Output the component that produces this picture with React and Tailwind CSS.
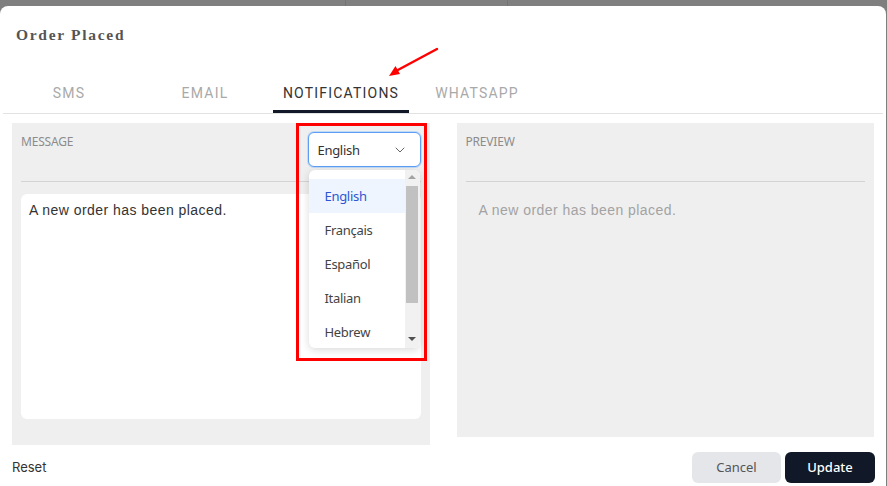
import { ChevronDown } from "lucide-react";

const tabs = ["SMS", "EMAIL", "NOTIFICATIONS", "WHATSAPP"];
const langs = ["English", "Français", "Español", "Italian", "Hebrew"];

export default function App() {
  return (
    <div className="relative w-[887px] h-[486px] overflow-hidden bg-[#7f7f7f]">
      {/* backdrop strip */}
      <div className="flex h-[6px]">
        <div className="w-[345px]" />
        <div className="w-px bg-[#747474]" />
        <div className="w-[161px]" />
        <div className="w-px bg-[#747474]" />
      </div>

      {/* Modal */}
      <div className="flex h-[480px] w-[886px] flex-col rounded-t-[8px] bg-white">
        <div className="h-[65px] pl-4 pt-[20px]">
          <h2 className="text-[15.5px] leading-[18px] font-bold tracking-[1.7px] text-[#555] [font-family:'Liberation_Serif',serif]">
            Order Placed
          </h2>
        </div>

        {/* Tabs */}
        <div className="mx-[3px] flex h-[43px] border-b border-[#e2e2e2] [font-family:Roboto,sans-serif]">
          {tabs.map((t, i) => (
            <button
              key={t}
              className={`flex h-[42px] w-[136px] items-center justify-center text-[14px] tracking-[1.2px] ${
                i === 2 ? "border-b-[3px] border-[#111827] pt-[5px] text-[#333]" : "pt-[2px] text-[#a9a9a9]"
              } ${i === 0 ? "-ml-[2px]" : ""}`}
            >
              {t}
            </button>
          ))}
        </div>

        {/* Panels */}
        <div className="mt-[9px] flex items-start gap-[27px] px-3">
          {/* Message */}
          <div className="flex h-[322px] w-[418px] flex-col bg-[#efefef] px-[9px] pt-[9px]">
            <div className="flex items-start justify-between">
              <span className="mt-[1px] text-[12px] tracking-[-0.2px] text-[#8c8c8c] [font-family:'Noto_Sans',sans-serif]">
                MESSAGE
              </span>
              <div className="relative">
                <div className="flex h-[35px] w-[113px] items-center justify-between rounded-[6px] border border-[#5d9df5] bg-white pl-[9px] pr-[12px] pt-[3px] shadow-[0_0_0_1px_rgba(147,197,253,0.5)] [font-family:'Noto_Sans',sans-serif]">
                  <span className="text-[13px] tracking-[-0.3px] text-[#333]">English</span>
                  <ChevronDown size={16} strokeWidth={1.5} className="-mt-[2px] text-[#666]" />
                </div>
                {/* Dropdown */}
                <div className="absolute left-[1px] top-[38px] z-10 flex h-[178px] w-[111px] overflow-hidden rounded-[6px] bg-white shadow-[0_2px_8px_rgba(0,0,0,0.15)] [font-family:'Noto_Sans',sans-serif]">
                  <div className="flex-1 pt-[9px]">
                    {langs.map((l, i) => (
                      <div
                        key={l}
                        className={`flex h-[34px] items-center pl-[16px] pt-[2px] text-[13px] tracking-[-0.3px] ${
                          i === 0 ? "bg-[#eef5ff] text-[#2f55d4]" : "text-[#444]"
                        }`}
                      >
                        {l}
                      </div>
                    ))}
                  </div>
                  <div className="flex w-[15px] flex-col items-center bg-[#f1f1f1]">
                    <div className="mt-[5px] h-0 w-0 border-x-[4px] border-b-[4px] border-x-transparent border-b-[#a3a3a3]" />
                    <div className="mt-[7px] h-[117px] w-[12px] bg-[#c1c1c1]" />
                    <div className="mt-auto mb-[7px] h-0 w-0 border-x-[4px] border-t-[4px] border-x-transparent border-t-[#505050]" />
                  </div>
                </div>
              </div>
            </div>
            <div className="mt-[14px] h-px bg-[#d3d3d3]" />
            <div className="mt-[12px] h-[225px] rounded-[6px] bg-white px-2 pt-[6px] text-[14px] tracking-[0.45px] text-[#333] [font-family:'Liberation_Sans',sans-serif]">
              A new order has been placed.
            </div>
          </div>

          {/* Preview */}
          <div className="flex h-[314px] w-[418px] flex-col bg-[#efefef] px-[9px] pt-[9px]">
            <span className="mt-[1px] text-[12px] tracking-[-0.2px] text-[#8c8c8c] [font-family:'Noto_Sans',sans-serif]">
              PREVIEW
            </span>
            <div className="mt-[30px] h-px bg-[#d3d3d3]" />
            <p className="mt-[18px] pl-[13px] text-[14px] tracking-[0.45px] text-[#a3a3a3] [font-family:'Liberation_Sans',sans-serif]">
              A new order has been placed.
            </p>
          </div>
        </div>

        {/* Footer */}
        <div className="mt-[7px] flex items-center justify-between pl-3 pr-[11px]">
          <button className="text-[13px] text-[#333] [font-family:Inter,sans-serif]">Reset</button>
          <div className="flex gap-[4px] [font-family:'Noto_Sans',sans-serif]">
            <button className="h-[31px] w-[89px] rounded-[6px] bg-[#e4e6ea] text-[13px] text-[#555]">Cancel</button>
            <button className="h-[31px] w-[90px] rounded-[6px] bg-[#111827] text-[13px] font-medium text-white">Update</button>
          </div>
        </div>
      </div>

      {/* annotation: red box */}
      <div className="pointer-events-none absolute left-[296px] top-[123px] z-20 h-[238px] w-[131px] border-[3px] border-[#f00]" />

      {/* annotation: red arrow */}
      <svg className="pointer-events-none absolute left-[380px] top-[40px] z-20" width="64" height="44" viewBox="0 0 64 44">
        <line x1="57" y1="9" x2="16" y2="31" stroke="#f00" strokeWidth="2.5" strokeLinecap="round" />
        <polygon points="9,36 20,34 15.5,26" fill="#f00" />
      </svg>
    </div>
  );
}
